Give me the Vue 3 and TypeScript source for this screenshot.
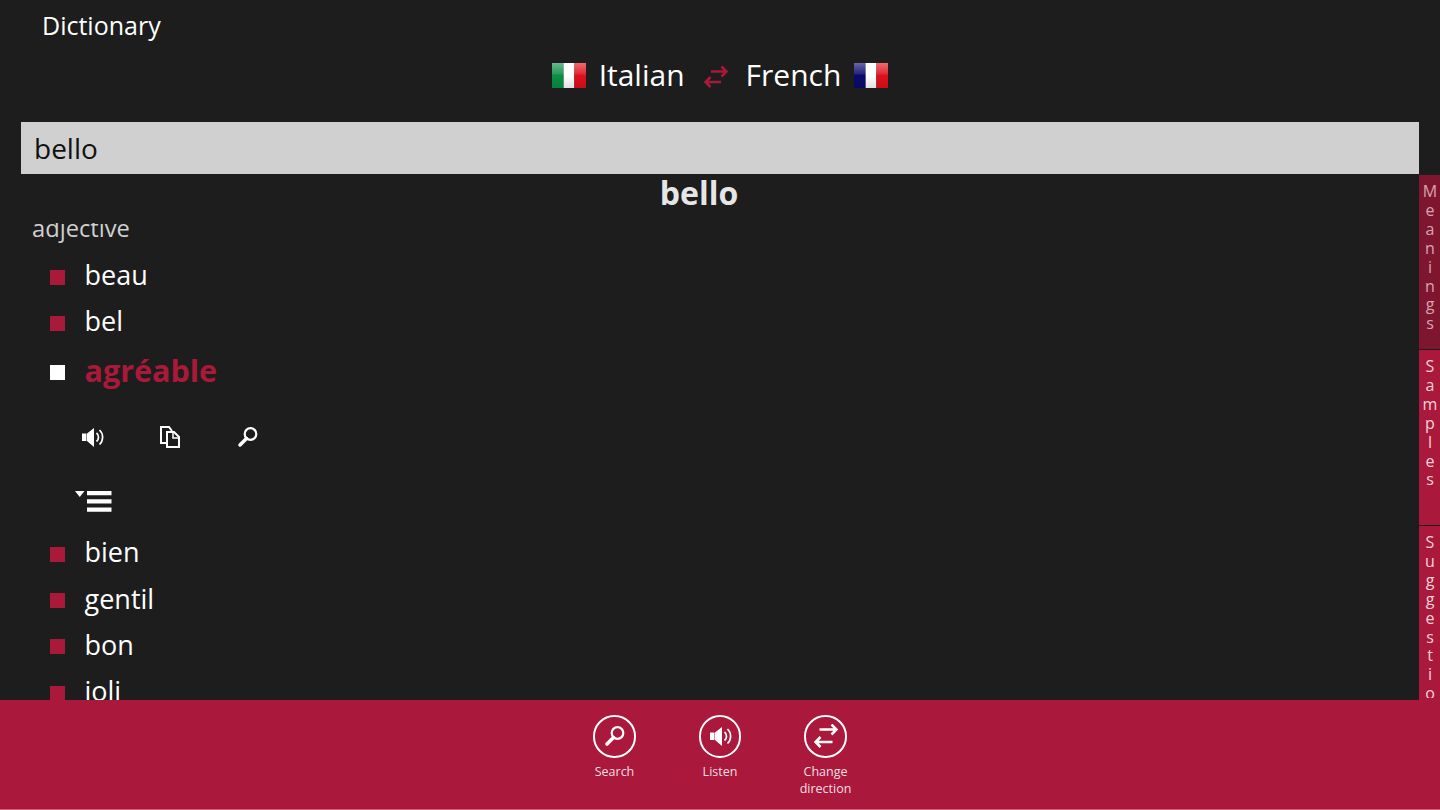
<script setup lang="ts">
const firstItems: string[] = ['beau', 'bel']
const lastItems: string[] = ['bien', 'gentil', 'bon', 'joli']
const tabs = [
  { label: 'Meanings', dim: true },
  { label: 'Samples', dim: false },
  { label: 'Suggestions', dim: false },
]
</script>

<template>
  <div class="page">
    <header class="head">
      <h1 class="title">Dictionary</h1>
      <div class="langs">
        <svg class="flag" viewBox="0 0 35 25" preserveAspectRatio="none" aria-hidden="true">
          <defs>
            <linearGradient id="gloss" x1="0" y1="0" x2="0" y2="1">
              <stop offset="0" stop-color="#fff" stop-opacity=".38" />
              <stop offset=".45" stop-color="#fff" stop-opacity=".1" />
              <stop offset=".5" stop-color="#000" stop-opacity="0" />
              <stop offset="1" stop-color="#000" stop-opacity=".12" />
            </linearGradient>
          </defs>
          <rect width="12" height="25" fill="#0a8f45" />
          <rect x="12" width="11" height="25" fill="#fff" />
          <rect x="23" width="12" height="25" fill="#e0101c" />
          <rect width="35" height="25" fill="url(#gloss)" />
        </svg>
        <span class="lang">Italian</span>
        <svg class="swap" viewBox="0 0 24 26" aria-hidden="true">
          <path d="M7 7.500H22.500M17.500 2.500l5 5-5 5M17 18H1.500M6.500 13l-5 5 5 5" fill="none" stroke="#a9193a" stroke-width="2.600" />
        </svg>
        <span class="lang">French</span>
        <svg class="flag" viewBox="0 0 35 25" preserveAspectRatio="none" aria-hidden="true">
          <rect width="12" height="25" fill="#0a0a6e" />
          <rect x="12" width="11" height="25" fill="#fff" />
          <rect x="23" width="12" height="25" fill="#e0101c" />
          <rect width="35" height="25" fill="url(#gloss)" />
        </svg>
      </div>
      <div class="search">bello</div>
    </header>

    <main class="body">
      <section class="content">
        <h2 class="word">bello</h2>
        <div class="scroller">
          <div class="part">adjective</div>
          <ul class="list">
            <li v-for="item in firstItems" :key="item" class="row">
              <i class="bullet"></i><span>{{ item }}</span>
            </li>
            <li class="row selected">
              <i class="bullet"></i><span>agréable</span>
            </li>
          </ul>
          <div class="actions">
            <svg class="act" viewBox="0 0 24 24" aria-hidden="true">
              <path d="M2 8.500h4.500v7.500H2zM7 8.500 14 3v19l-7-6z" fill="#fff" />
              <path d="M16.500 8a5.500 5.500 0 0 1 0 8.500M19.500 5a10 10 0 0 1 0 14.500" fill="none" stroke="#fff" stroke-width="1.700" />
            </svg>
            <svg class="act" viewBox="0 0 24 24" aria-hidden="true">
              <path d="M8 18H3V2h8l3 4" fill="none" stroke="#fff" stroke-width="2" />
              <path d="M9 7h7l5 5v10H9z" fill="none" stroke="#fff" stroke-width="2" />
              <path d="M15 7v6h6" fill="none" stroke="#fff" stroke-width="1.500" />
            </svg>
            <svg class="act" viewBox="0 0 24 24" aria-hidden="true">
              <circle cx="14.500" cy="9" r="5.800" fill="none" stroke="#fff" stroke-width="2.200" />
              <path d="M10.500 13.500 4 20" fill="none" stroke="#fff" stroke-width="3.500" stroke-linecap="round" />
            </svg>
          </div>
          <svg class="more" viewBox="0 0 37 26" aria-hidden="true">
            <path d="M0 2h9.500L4.750 8z" fill="#fff" />
            <path d="M12 2h24.500v4.200H12zM12 10.300h24.500v4.200H12zM12 18.600h24.500v4.200H12z" fill="#fff" />
          </svg>
          <ul class="list">
            <li v-for="item in lastItems" :key="item" class="row">
              <i class="bullet"></i><span>{{ item }}</span>
            </li>
          </ul>
        </div>
      </section>
      <nav class="tabs">
        <div v-for="tab in tabs" :key="tab.label" class="tab" :class="{ dim: tab.dim }">
          <span class="tab-label">{{ tab.label }}</span>
        </div>
      </nav>
    </main>

    <footer class="bar">
      <button class="cmd">
        <span class="ring">
          <svg viewBox="0 0 24 24" aria-hidden="true">
            <circle cx="14.500" cy="9" r="5.800" fill="none" stroke="#fff" stroke-width="2.200" />
            <path d="M10.500 13.500 4 20" fill="none" stroke="#fff" stroke-width="3.500" stroke-linecap="round" />
          </svg>
        </span>
        <span class="cap">Search</span>
      </button>
      <button class="cmd">
        <span class="ring">
          <svg viewBox="0 0 24 24" aria-hidden="true">
            <path d="M2 8.500h4.500v7.500H2zM7 8.500 14 3v19l-7-6z" fill="#fff" />
            <path d="M16.500 8a5.500 5.500 0 0 1 0 8.500M19.500 5a10 10 0 0 1 0 14.500" fill="none" stroke="#fff" stroke-width="1.700" />
          </svg>
        </span>
        <span class="cap">Listen</span>
      </button>
      <button class="cmd">
        <span class="ring">
          <svg viewBox="0 0 24 24" aria-hidden="true">
            <path d="M5.500 5.500H22.500M17.500 0.500l5 5-5 5M18.500 18H1.500M6.500 13l-5 5 5 5" fill="none" stroke="#fff" stroke-width="2.500" />
          </svg>
        </span>
        <span class="cap">Change direction</span>
      </button>
    </footer>
  </div>
</template>

<style scoped>
.page {
  width: 1440px;
  height: 810px;
  display: flex;
  flex-direction: column;
  overflow: hidden;
  background: #1d1d1d;
  color: #fff;
  font-family: "Open Sans", "Noto Sans", sans-serif;
}
.head {
  flex: none;
  height: 174px;
  display: flex;
  flex-direction: column;
  padding: 0 21px;
  box-sizing: border-box;
}
.title {
  margin: 0 0 0 21px;
  height: 52px;
  font-size: 25px;
  font-weight: 400;
  line-height: 50px;
}
.langs {
  display: flex;
  align-items: center;
  justify-content: center;
  height: 46px;
  gap: 13px;
}
.flag { width: 34px; height: 25px; }
.swap { width: 24px; height: 26px; margin: 3px 5px 0 6px; }
.lang { font-size: 30px; line-height: 46px; }
.search {
  margin-top: 24px;
  height: 52px;
  background: #d0d0d0;
  color: #111;
  font-size: 28px;
  line-height: 52px;
  padding-left: 13px;
}
.body {
  flex: 1;
  min-height: 0;
  display: flex;
}
.content {
  flex: 1;
  min-width: 0;
  display: flex;
  flex-direction: column;
}
.word {
  margin: 0 21px 0 0;
  height: 49px;
  text-align: center;
  font-size: 32px;
  font-weight: 700;
  line-height: 38px;
  color: #e6e6e6;
}
.scroller {
  flex: 1;
  min-height: 0;
  overflow: hidden;
  padding-left: 21px;
}
.part {
  margin: -10.500px 0 0 11px;
  font-size: 23.700px;
  line-height: 30px;
  color: #d0d0d0;
}
.list {
  list-style: none;
  margin: 0;
  padding: 0 0 0 29px;
}
.list:first-of-type { margin-top: 9px; }
.row {
  display: flex;
  align-items: center;
  height: 46.300px;
  font-size: 27px;
}
.bullet {
  width: 14.500px;
  height: 15px;
  background: #a9193a;
  margin: 5px 20px 0 0;
}
.selected { height: 52px; color: #a9193a; font-weight: 700; font-size: 30.500px; }
.selected .bullet { background: #fff; margin-top: 4px; }
.actions {
  display: flex;
  gap: 54px;
  padding: 29px 0 0 59px;
}
.act { width: 24px; height: 24px; display: block; }
.more {
  display: block;
  width: 37px;
  height: 26px;
  margin: 40px 0 13.500px 54px;
}
.tabs {
  flex: none;
  width: 21px;
  display: flex;
  flex-direction: column;
  gap: 1px;
  padding-top: 1px;
  overflow: hidden;
}
.tab {
  flex: none;
  height: 175px;
  background: #aa193c;
  color: #f3d3da;
  box-sizing: border-box;
  padding: 5px 0 3px;
  display: flex;
  justify-content: center;
}
.tab.dim { background: #7f1630; color: #d8a3b0; height: 174px; }
.tab-label {
  display: block;
  writing-mode: vertical-rl;
  text-orientation: upright;
  height: 100%;
  overflow: hidden;
  font-size: 16px;
  line-height: 21px;
  letter-spacing: -3.100px;
}
.bar {
  flex: none;
  height: 110px;
  background: #aa193c;
  border-bottom: 1px solid #c8607a;
  display: flex;
  justify-content: center;
  box-sizing: border-box;
}
.cmd {
  width: 105.500px;
  padding: 15px 8px 0;
  background: none;
  border: 0;
  color: #fff;
  font: inherit;
  display: flex;
  flex-direction: column;
  align-items: center;
}
.ring {
  width: 42.500px;
  height: 42.500px;
  flex: none;
  border: 2px solid #fff;
  border-radius: 50%;
  box-sizing: border-box;
  display: flex;
  align-items: center;
  justify-content: center;
}
.ring svg { width: 24px; height: 24px; flex: none; }
.cap {
  margin-top: 5px;
  font-size: 12.500px;
  line-height: 17px;
  text-align: center;
  color: #f5dfe4;
}
</style>
